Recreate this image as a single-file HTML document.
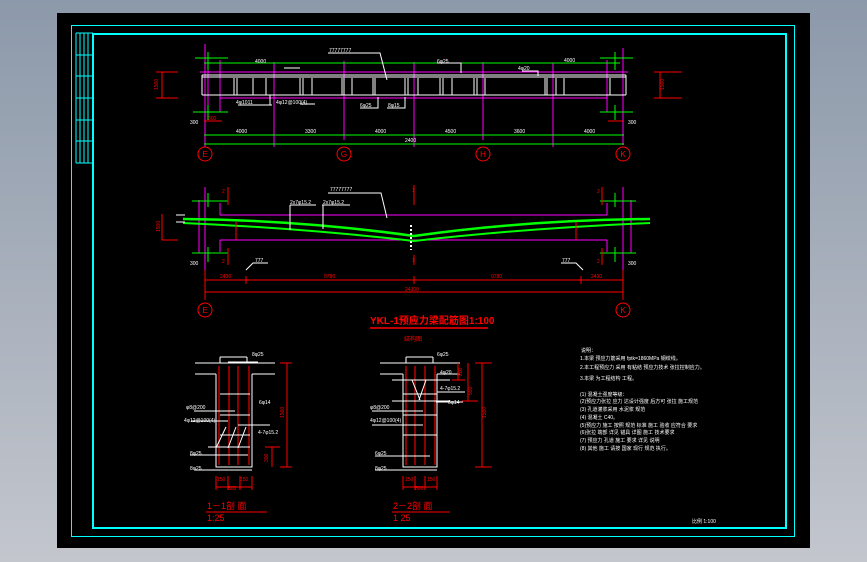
<!DOCTYPE html>
<html><head><meta charset="utf-8"><style>
html,body{margin:0;padding:0;width:867px;height:562px;overflow:hidden;background:linear-gradient(#8c99aa,#c3c6cd);}
svg{position:absolute;left:0;top:0}
text{font-family:"Liberation Sans","Noto Sans CJK SC",sans-serif}
</style></head><body>
<svg width="867" height="562" viewBox="0 0 867 562">
<rect x="57" y="13" width="753" height="535" fill="#000"/>
<!-- frame -->
<rect x="71.5" y="25.5" width="723" height="511" fill="none" stroke="#0ff" stroke-width="1"/>
<path d="M93,34 H786 V528 H93 Z" fill="none" stroke="#0ff" stroke-width="2"/>
<g stroke="#0ff" stroke-width="1" fill="none">
<path d="M76,33 V163 M80,33 V163 M84,33 V163 M88,33 V163 M76,33 H93 M76,55 H93 M76,76 H93 M76,98 H93 M76,120 H93 M76,141 H93 M76,163 H93"/>
</g>
<!-- TOP ELEVATION -->
<g fill="none" stroke-width="1">
<path stroke="#f0f" d="M200,72 H628 M220,98 H607 M205,44 V147 M220,60 V112 M274,62 V147 M344,61 V140 M414,62 V147 M483,62 V140 M553,63 V147 M623,48 V145 M208,60 V112 M607,60 V112"/>
<path stroke="#0f0" d="M204,63 H620 M204,135 H624 M204,144 H624 M195,58 H228 M193,112 H228 M600,58 H633 M600,112 H633 M208,52 V70 M208,105 V120 M615,52 V70 M615,105 V120"/>
<path stroke="#fff" d="M202,75 H626 M202,77 H626 M202,95 H626 M202,75 V95 M626,75 V95"/>
<path stroke="#fff" d="M234,78V95 M237,78V95 M253,78V95 M266,78V95 M300,78V95 M303,78V95 M312,78V95 M342,78V95 M344,78V95 M352,78V95 M373,78V95 M375,78V95 M405,78V95 M408,78V95 M418,78V95 M440,78V95 M443,78V95 M452,78V95 M474,78V95 M477,78V95 M485,78V95 M545,78V95 M547,78V95 M556,78V95 M564,78V95 M610,78V95"/>
<path stroke="#fff" d="M328,53 H380 L387,80 M437,63 H461 V73 M522,71 H538 V76 M238,105 H272 M270,105V95 M300,104H315 M360,108H378 V97 M387,108H405 V97 M284,68H300"/>
<path stroke="#f00" d="M162,72 V98 M156,72 H178 M156,98 H178 M660,72 V98 M654,72 H682 M654,98 H682 M204,121 H222 M608,121 H624"/>
</g>
<g fill="#fff" font-size="5">
<text x="329" y="52">77777777</text><text x="437" y="63">6φ25</text><text x="518" y="70">4φ20</text>
<text x="236" y="104">4φ1011</text><text x="276" y="104">4φ12@100(4)</text><text x="360" y="107">6φ25</text><text x="388" y="107">8φ15</text>
<text x="190" y="124">300</text><text x="628" y="124">300</text>
<text x="236" y="133">4000</text><text x="305" y="133">3300</text><text x="375" y="133">4000</text><text x="445" y="133">4500</text><text x="514" y="133">3600</text><text x="584" y="133">4000</text>
<text x="405" y="142">2400</text><text x="255" y="63">4000</text><text x="564" y="62">4000</text>
</g>
<g fill="#f00" font-size="5"><text x="158" y="90" transform="rotate(-90 158 90)">1500</text><text x="664" y="90" transform="rotate(-90 664 90)">1500</text><text x="208" y="120">300</text></g>
<g fill="none" stroke="#f00"><circle cx="205" cy="154" r="7"/><circle cx="344" cy="154" r="7"/><circle cx="483" cy="154" r="7"/><circle cx="623" cy="154" r="7"/></g>
<g fill="#f00" font-size="8" text-anchor="middle"><text x="205" y="157">E</text><text x="344" y="157">G</text><text x="483" y="157">H</text><text x="623" y="157">K</text></g>

<!-- SECOND ELEVATION -->
<g fill="none" stroke-width="1">
<path stroke="#f0f" d="M220,215 H607 M220,240 H607 M220,203 V215 M607,203 V215 M220,240 V252 M607,240 V252 M205,187 V270 M623,187 V270 M199,200 V253 M631,200 V253"/>
<path stroke="#0f0" d="M192,201 H228 M192,253 H228 M600,201 H636 M600,253 H636 M208,193 V207 M208,247 V262 M615,193 V207 M615,247 V262"/>
<path stroke="#0f0" stroke-width="2.5" d="M183,219 Q300,220 414,236 Q528,220 650,219"/>
<path stroke="#0f0" stroke-width="2" d="M183,223 Q300,228 414,241 Q528,228 650,223"/>
<path stroke="#f00" d="M228,187 V205 M228,248 V265 M414,185 V205 M414,255 V265 M602,187 V205 M602,248 V265 M205,280 H623 M205,292 H623 M205,270 V300 M246,276 V284 M414,276 V284 M581,276 V284 M623,270 V300 M162,214 V240 M162,240 H178 M236,222 V240 M576,222 V240"/>
<path stroke="#fff" d="M328,193 H381 L387,218 M290,205 H316 M290,205 V230 M322,205 H350 M323,205 V229 M246,270 L253,263 H268 M583,270 L576,263 H561 M176,215 H185 M176,222 H185"/>
<path stroke="#fff" stroke-dasharray="2,2" stroke-width="2" d="M411,225 V250"/>
</g>
<g fill="#fff" font-size="5">
<text x="330" y="191">77777777</text><text x="290" y="204">2x7φ15.2</text><text x="323" y="204">2x7φ15.2</text>
<text x="255" y="262">777</text><text x="562" y="262">777</text><text x="190" y="265">300</text><text x="628" y="265">300</text>
</g>
<g fill="#f00" font-size="5">
<text x="220" y="278">2430</text><text x="324" y="278">9780</text><text x="491" y="278">9780</text><text x="591" y="278">2430</text><text x="405" y="291">24300</text>
<text x="222" y="193">2</text><text x="597" y="193">2</text><text x="222" y="263">2</text><text x="597" y="263">2</text><text x="412" y="192">1</text><text x="412" y="262">1</text>
<text x="160" y="232" transform="rotate(-90 160 232)">1500</text>
</g>
<g fill="none" stroke="#f00"><circle cx="205" cy="310" r="7"/><circle cx="623" cy="310" r="7"/></g>
<g fill="#f00" font-size="8" text-anchor="middle"><text x="205" y="313">E</text><text x="623" y="313">K</text></g>
<text x="370" y="324" fill="#f00" font-size="10" font-weight="bold">YKL-1预应力梁配筋图1:100</text>
<path d="M370,328 H488" stroke="#f00" stroke-width="1.5"/>
<text x="404" y="341" fill="#f00" font-size="6">结构图</text>

<!-- SECTION 1-1 -->
<g fill="none" stroke-width="1">
<path stroke="#8b0000" stroke-width="2" d="M219,366 V465 M229,366 V465 M238,366 V465 M249,366 V465"/>
<path stroke="#fff" d="M195,363 H275 M195,374 H216 M252,374 H275 M216,374 V467 H252 V374 M220,357 V363 M247,357 V363 M220,357 H247 M220,394 H250 M220,415 H250 M220,435 H250 M194,411 H235 M191,421 H228 M238,425 H270 M208,447 H250 M190,455 H248 M195,470 H252 M228,362 H258 M226,427 L216,448 M236,427 L228,448 M246,427 L238,448"/>
<path stroke="#f00" d="M287,363 V467 M280,363 H292 M280,467 H292 M272,447 V467 M265,447 H280 M216,476 V490 M228,476 V490 M240,476 V490 M252,476 V490 M216,487 H252"/>
</g>
<g fill="#fff" font-size="5"><text x="252" y="356">8φ25</text><text x="186" y="409">φ8@200</text><text x="184" y="422">4φ12@100(4)</text><text x="259" y="404">6φ14</text><text x="258" y="434">4-7φ15.2</text><text x="190" y="455">8φ25</text><text x="190" y="470">8φ25</text></g>
<g fill="#f00" font-size="5"><text x="284" y="418" transform="rotate(-90 284 418)">1500</text><text x="268" y="462" transform="rotate(-90 268 462)">300</text><text x="217" y="481">150</text><text x="240" y="481">150</text><text x="228" y="490">500</text></g>
<text x="207" y="509" fill="#f00" font-size="9">1－1剖 面</text>
<path d="M206,512 H267" stroke="#f00"/>
<text x="207" y="521" fill="#f00" font-size="9">1:25</text>

<!-- SECTION 2-2 -->
<g fill="none" stroke-width="1">
<path stroke="#8b0000" stroke-width="2" d="M406,366 V465 M415,366 V465 M425,366 V465 M435,366 V465"/>
<path stroke="#fff" d="M380,363 H460 M380,374 H403 M437,374 H460 M403,374 V467 H437 V374 M406,357 V363 M433,357 V363 M406,357 H433 M403,394 H437 M403,415 H437 M403,435 H437 M392,380 H450 M392,401 H450 M437,392 H465 M436,402 H463 M372,411 H423 M372,425 H423 M375,456 H430 M375,470 H437 M412,380 L420,400 M426,380 L419,400"/>
<path stroke="#f00" d="M482,363 V467 M475,363 H492 M475,467 H492 M468,363 V401 M462,401 H478 M458,363 V380 M452,380 H465 M403,476 V490 M415,476 V490 M425,476 V490 M437,476 V490 M403,487 H437"/>
</g>
<g fill="#fff" font-size="5"><text x="437" y="356">6φ25</text><text x="440" y="374">4φ20</text><text x="440" y="390">4-7φ15.2</text><text x="448" y="404">6φ14</text><text x="370" y="409">φ8@200</text><text x="370" y="422">4φ12@100(4)</text><text x="375" y="455">6φ25</text><text x="375" y="470">8φ25</text></g>
<g fill="#f00" font-size="5"><text x="486" y="418" transform="rotate(-90 486 418)">1500</text><text x="472" y="395" transform="rotate(-90 472 395)">550</text><text x="462" y="376" transform="rotate(-90 462 376)">200</text><text x="405" y="481">150</text><text x="427" y="481">150</text><text x="415" y="490">500</text></g>
<text x="393" y="509" fill="#f00" font-size="9">2－2剖 面</text>
<path d="M392,512 H450" stroke="#f00"/>
<text x="393" y="521" fill="#f00" font-size="9">1 25</text>

<!-- NOTES -->
<g fill="#fff" font-size="5">
<text x="581" y="352">说明：</text>
<text x="580" y="360">1.本梁 预应力筋采用 fptk=1860MPa 钢绞线。</text>
<text x="580" y="369">2.本工程预应力 采用 有粘结 预应力技术 张拉控制应力。</text>
<text x="580" y="380">3.本梁 为工程结构 工程。</text>
<text x="580" y="396">(1) 混凝土强度等级：</text>
<text x="580" y="403">(2)预应力张拉 应力 达设计强度 后方可 张拉 施工规范</text>
<text x="580" y="411">(3) 孔道灌浆采用 水泥浆 规范</text>
<text x="580" y="419">(4) 混凝土 C40。</text>
<text x="580" y="427">(5)预应力 施工 按照 规范 标准 施工 验收 应符合 要求</text>
<text x="580" y="434">(6)张拉 端部 详见 锚具 详图 施工 技术要求</text>
<text x="580" y="442">(7) 预应力 孔道 施工 要求 详见 说明</text>
<text x="580" y="450">(8) 其他 施工 请按 国家 现行 规范 执行。</text>
<text x="692" y="523">比例 1:100</text>
</g>
</svg>
</body></html>
